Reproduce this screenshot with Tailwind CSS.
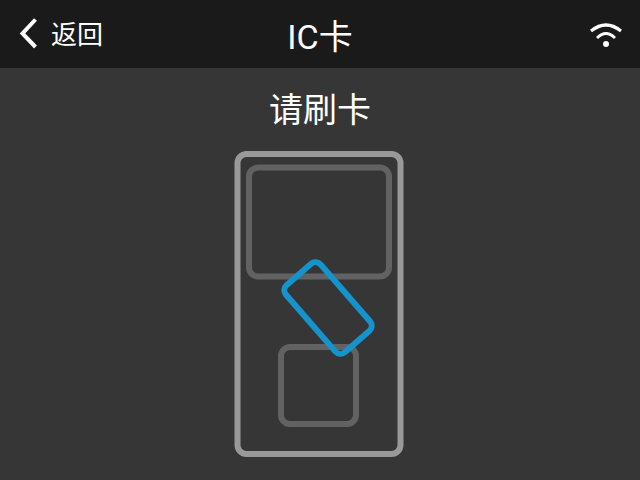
<!DOCTYPE html>
<html>
<head>
<meta charset="utf-8">
<script src="https://cdn.jsdelivr.net/npm/@tailwindcss/browser@4"></script>
</head>
<body class="m-0">
<div class="w-[640px] h-[480px] overflow-hidden bg-[#363636] text-white flex flex-col font-['Roboto','Noto_Sans_CJK_SC',sans-serif]">
  <header class="h-[68px] bg-[#1a1a1a] relative flex items-center justify-between pl-[19px] pr-[17px] shrink-0">
    <div class="flex items-center gap-[13px]">
      <svg class="mt-[-3px]" width="19" height="32" viewBox="0 0 19 32" fill="none"><path d="M16.5 2.5 L3.5 16.5 L16.5 30" stroke="#fff" stroke-width="4"/></svg>
      <span class="text-[26px] leading-none mt-[1px]">返回</span>
    </div>
    <h1 class="absolute left-0 right-0 top-[18px] text-center text-[34px] leading-[38px] font-normal">IC卡</h1>
    <svg class="mt-[-1px]" width="34" height="28" viewBox="0 0 34 28" fill="none"><path d="M2 11 Q17 -1 32 11" stroke="#fff" stroke-width="3.2"/><path d="M8 18 Q17 9 26 18" stroke="#fff" stroke-width="3"/><circle cx="17" cy="24" r="3" fill="#fff"/></svg>
  </header>
  <main class="flex flex-col items-center">
    <p class="text-[34px] leading-[40px] mt-[22px]">请刷卡</p>
    <svg class="mt-[21px] ml-[-2px]" width="170" height="307" viewBox="0 0 170 307" fill="none">
      <rect x="3.5" y="3" width="163" height="300" rx="9" stroke="#999" stroke-width="6"/>
      <rect x="15" y="16.5" width="140" height="109" rx="9" stroke="#626262" stroke-width="6"/>
      <rect x="47" y="196" width="75" height="77" rx="9" stroke="#626262" stroke-width="6"/>
      <rect x="-44.5" y="-23" width="89" height="46" rx="7" transform="translate(94 157) rotate(49)" stroke="#1593cc" stroke-width="6"/>
    </svg>
  </main>
</div>
</body>
</html>
